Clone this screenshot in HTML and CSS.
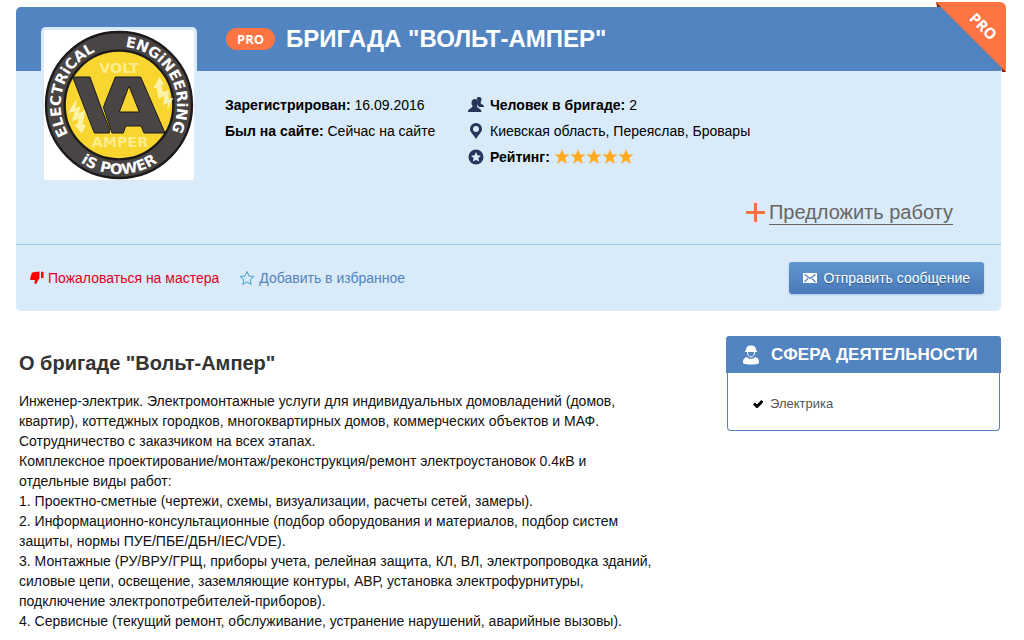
FILE: index.html
```html
<!DOCTYPE html>
<html lang="ru">
<head>
  <meta charset="UTF-8" />
  <meta name="viewport" content="width=device-width, initial-scale=1.0"/>
  <title>Бригада "Вольт-Ампер"</title>
  <link rel="stylesheet" href="styles.css">
</head>
<body>
  <section class="profile">
    <div class="ribbon">
      <svg viewBox="0 0 70 70">
        <path fill="#7a2a12" d="M0 0h5v5H1zM65 65h5v5h-4z"/>
        <path fill="#ff7443" d="M0 0H64a6 6 0 0 1 6 6V70z"/>
      </svg>
      <span>PRO</span>
    </div>

    <header class="profile-header">
      <span class="pro-badge">PRO</span>
      <h1>Бригада "Вольт-Ампер"</h1>
    </header>

    <div class="profile-body">
      <div class="avatar">
        <svg viewBox="0 0 450 450" role="img" aria-label="Volt Amper">
          <defs>
            <path id="ringTop" d="M225 400 A175 175 0 0 1 225 50 A175 175 0 0 1 225 400"/>
            <path id="ringBottom" d="M225 18 A207 207 0 0 0 225 432 A207 207 0 0 0 225 18"/>
          </defs>
          <circle cx="225" cy="225" r="219" fill="#4a4545" stroke="#1c1a1a" stroke-width="7"/>
          <circle cx="225" cy="225" r="163" fill="#f9d62f" stroke="#1c1a1a" stroke-width="7"/>
          <g class="logo-ring">
            <text><textPath href="#ringTop" startOffset="30%">ELECTRiCAL</textPath></text>
            <text><textPath href="#ringTop" startOffset="67%">ENGiNEERiNG</textPath></text>
            <text><textPath href="#ringBottom" startOffset="50%">iS POWER</textPath></text>
          </g>
          <g class="logo-name">
            <text x="225" y="129">VOLT</text>
            <text x="228" y="352">AMPER</text>
          </g>
          <g fill="#fdf3a8">
            <path d="M98 206 L72 250 L92 244 L84 274 L104 266 L100 284 H90 L114 310 L126 284 H116 L124 240 L104 250 L110 228 L94 236 Z"/>
            <path d="M346 142 L328 174 H338 L344 206 L360 198 L358 226 L372 218 L370 240 L388 204 L374 206 L374 180 L358 186 L352 166 L360 162 Z"/>
          </g>
          <g fill="#4a4545" stroke="#1c1a1a" stroke-width="3">
            <path d="M86 141 H138 L171 232 L196 296 V309 H151 Z"/>
            <path d="M226 141 H290 L363 309 H300 L291 288 H245 L238 309 H204 L178 232 L214 141 Z"/>
          </g>
          <path fill="#f9d62f" stroke="#1c1a1a" stroke-width="3" d="M255 168 L286 246 H226 Z"/>
        </svg>
      </div>

      <div class="facts">
        <p><b>Зарегистрирован:</b> 16.09.2016</p>
        <p><b>Был на сайте:</b> Сейчас на сайте</p>
      </div>

      <div class="facts facts-team">
        <p>
          <svg class="icon" viewBox="0 0 16 16"><path d="M11 0c2 0 2.500 1 2.500 2.500 0 1.500-.5 2-1 3 0 2 3.500 1.500 3.500 4.500h-5L9 7c1-1 .5-6-.5-6C9 .5 10 0 11 0z"/><path d="M7 2c2 0 3 1.500 3 3.500C10 7 9.500 8 9 9c0 2.500 4.500 2 4.500 6H0c0-4 4.500-3.500 4.500-6C4 8 3.500 7 3.500 5.500 3.500 3.500 5 2 7 2z"/></svg>
          <b>Человек в бригаде:</b> 2
        </p>
        <p>
          <svg class="icon" viewBox="0 0 16 16"><path fill-rule="evenodd" d="M8 0a6 6 0 0 1 6 6c0 3-3 5-6 10C5 11 2 9 2 6a6 6 0 0 1 6-6zm0 3a3 3 0 1 0 0 6 3 3 0 0 0 0-6z"/></svg>
          Киевская область, Переяслав, Бровары
        </p>
        <p>
          <svg class="icon" viewBox="0 0 16 16"><circle cx="8" cy="8" r="7.500"/><path class="icon-hole" d="M8 3l1.500 3.300 3.500.4-2.600 2.400.7 3.500L8 10.900l-3.100 1.700.7-3.500L3 6.700l3.500-.4z"/></svg>
          <b>Рейтинг:</b>
          <svg class="stars" viewBox="0 0 80 16" role="img" aria-label="5 из 5">
            <defs><path id="star" d="M8 0l2 5.500h5.500L11 9l2 6-5-3.500L3 15l2-6L.5 5.500H6z"/></defs>
            <use href="#star"/><use href="#star" x="16"/><use href="#star" x="32"/><use href="#star" x="48"/><use href="#star" x="64"/>
          </svg>
        </p>
      </div>
    </div>

    <div class="offer">
      <svg class="plus" viewBox="0 0 19 19"><path d="M8 0h3v8h8v3h-8v8H8v-8H0V8h8z"/></svg>
      <a href="#">Предложить работу</a>
    </div>

    <footer class="profile-footer">
      <a href="#" class="complain">
        <svg viewBox="0 0 14 14"><path d="M2 1.500L9.500.5V7L6 13C4 13 4.500 11 5 9H1C0 9 0 8 .5 6zM11 .5l2.500.5V7H11z"/></svg>
        Пожаловаться на мастера
      </a>
      <a href="#" class="favorite">
        <svg viewBox="0 0 16 16"><path d="M8 1.500l2 4.500 4.800.5-3.600 3.200 1 4.800L8 12l-4.200 2.500 1-4.800L1.200 6.500 6 6z"/></svg>
        Добавить в избранное
      </a>
      <button type="button" class="message">
        <svg viewBox="0 0 14 10"><path fill="#fff" d="M0 0h14v10H0z"/><path fill="none" stroke="#4f81bf" stroke-width="1.200" d="M1.500 1.500L7 5.500l5.500-4M1.500 9L5 5.500M12.500 9L9 5.500"/></svg>
        Отправить сообщение
      </button>
    </footer>
  </section>

  <div class="columns">
    <main>
      <h2>О бригаде "Вольт-Ампер"</h2>
      <p>Инженер-электрик. Электромонтажные услуги для индивидуальных домовладений (домов, квартир), коттеджных городков, многоквартирных домов, коммерческих объектов и МАФ.</p>
      <p>Сотрудничество с заказчиком на всех этапах.</p>
      <p>Комплексное проектирование/монтаж/реконструкция/ремонт электроустановок 0.4кВ и отдельные виды работ:</p>
      <p>1. Проектно-сметные (чертежи, схемы, визуализации, расчеты сетей, замеры).</p>
      <p>2. Информационно-консультационные (подбор оборудования и материалов, подбор систем защиты, нормы ПУЕ/ПБЕ/ДБН/IEC/VDE).</p>
      <p>3. Монтажные (РУ/ВРУ/ГРЩ, приборы учета, релейная защита, КЛ, ВЛ, электропроводка зданий, силовые цепи, освещение, заземляющие контуры, АВР, установка электрофурнитуры, подключение электропотребителей-приборов).</p>
      <p>4. Сервисные (текущий ремонт, обслуживание, устранение нарушений, аварийные вызовы).</p>
    </main>

    <aside class="activity">
      <h3>
        <svg viewBox="0 0 16 20"><path d="M3 5c0-3 2-4 3.500-4.500h3C11 1 13 2 13 5l1 1v1H2V6z"/><path fill="none" stroke="#fff" d="M4.500 7c0 3 1.500 5 3.500 5s3.500-2 3.500-5"/><path d="M0 18c0-4 1-5 4-6 2 2.500 6 2.500 8 0 3 1 4 2 4 6-1 2-15 2-16 0z"/></svg>
        Сфера деятельности
      </h3>
      <ul>
        <li>
          <svg viewBox="0 0 10 8"><path d="M1 3.500l3 3 5.500-5.500"/></svg>
          Электрика
        </li>
      </ul>
    </aside>
  </div>
</body>
</html>
```
FILE: styles.css
```css
* {
  margin: 0;
  padding: 0;
  box-sizing: border-box;
}

body {
  font-family: "Liberation Sans", Arial, sans-serif;
  font-size: 14px;
  line-height: 20px;
  color: #111;
  background-color: #fff;
  padding: 7px 23px 0 16px;
}

svg {
  flex-shrink: 0;
}

/* Profile card */
.profile {
  position: relative;
  background-color: #d9eaf8;
  border-radius: 5px;
}

.profile-header {
  display: flex;
  align-items: center;
  gap: 11px;
  height: 64px;
  padding-left: 210px;
  background-color: #5284c1;
  border-radius: 5px 0 0 0;
}

.profile-header h1 {
  font-size: 24px;
  line-height: 28px;
  color: #fff;
  text-transform: uppercase;
}

.pro-badge {
  padding: 0 11px;
  border-radius: 11px;
  background-color: #ff7443;
  color: #fff;
  font-family: "Open Sans", sans-serif;
  font-size: 13px;
  font-weight: bold;
  line-height: 22px;
}

/* Corner ribbon */
.ribbon {
  position: absolute;
  top: -5px;
  right: -5px;
  width: 70px;
  height: 70px;
}

.ribbon svg {
  display: block;
}

.ribbon span {
  position: absolute;
  top: 14px;
  right: 7px;
  color: #fff;
  font-family: "Open Sans", sans-serif;
  font-size: 15px;
  font-weight: bold;
  transform: rotate(45deg);
}

.profile-body {
  display: flex;
  height: 122px;
  padding-left: 25px;
}

.avatar {
  width: 156px;
  height: 156px;
  margin-top: -44px;
  border: 3px solid #d9eaf8;
  border-radius: 5px;
  background-color: #fff;
}

.avatar svg {
  display: block;
  width: 100%;
}

.logo-ring {
  fill: #fff;
  font-family: "DejaVu Sans", sans-serif;
  font-size: 44px;
  font-weight: bold;
  text-anchor: middle;
}

.logo-name {
  fill: #fdec8a;
  font-family: "DejaVu Sans", sans-serif;
  font-size: 43px;
  font-weight: bold;
  text-anchor: middle;
}

.facts {
  width: 243px;
  padding-top: 21px;
  margin-left: 28px;
  line-height: 26px;
  color: #000;
}

.facts-team {
  flex: 1;
  margin-left: 0;
}

.facts-team p {
  display: flex;
  align-items: center;
  gap: 4px;
}

.icon {
  width: 16px;
  height: 16px;
  margin-right: 2px;
  fill: #25365a;
}

.icon-hole {
  fill: #d9eaf8;
}

.stars {
  width: 80px;
  height: 16px;
  fill: #ffa81a;
}

.offer {
  display: flex;
  justify-content: flex-end;
  align-items: center;
  gap: 4px;
  height: 51px;
  padding: 0 48px 12px 0;
}

.offer a {
  color: #666;
  font-size: 20px;
  line-height: 23px;
  text-decoration: none;
  border-bottom: 1px solid #666;
}

.plus {
  width: 19px;
  height: 19px;
  fill: #f0743f;
}

.profile-footer {
  display: flex;
  align-items: center;
  gap: 20px;
  height: 67px;
  padding: 0 17px 0 14px;
  border-top: 1px solid #9cc8e8;
}

.profile-footer a {
  display: flex;
  align-items: center;
  gap: 4px;
  text-decoration: none;
}

.profile-footer .complain {
  color: #e2001a;
}

.complain svg {
  width: 14px;
  height: 14px;
  fill: #f00;
}

.profile-footer .favorite {
  color: #5284c1;
}

.favorite svg {
  width: 16px;
  height: 16px;
  fill: none;
  stroke: #45a0cc;
}

.message {
  display: flex;
  align-items: center;
  gap: 6px;
  height: 32px;
  margin-left: auto;
  padding: 0 14px;
  border: none;
  border-radius: 3px;
  background: linear-gradient(#5f97d0, #4a79b8);
  color: #fff;
  font-family: inherit;
  font-size: 14px;
  text-shadow: 0 1px 1px #2d5790;
  box-shadow: 0 1px 2px #a9c3e0;
  cursor: pointer;
}

.message svg {
  width: 14px;
  height: 10px;
}

/* Description and sidebar */
.columns {
  display: flex;
  align-items: flex-start;
  gap: 72px;
  padding: 25px 0 0 3px;
}

main {
  flex: 1;
}

main h2 {
  margin: 15px 0 16px;
  font-size: 20px;
  line-height: 24px;
  color: #333;
}

.activity {
  width: 275px;
}

.activity h3 {
  display: flex;
  align-items: center;
  gap: 12px;
  height: 37px;
  padding-left: 17px;
  border-radius: 3px 3px 0 0;
  background-color: #5284c1;
  color: #fff;
  font-size: 17px;
  text-transform: uppercase;
}

.activity h3 svg {
  width: 16px;
  height: 20px;
  fill: #fff;
}

.activity ul {
  margin: 0 1px;
  padding: 21px 25px 16px;
  border: 1px solid #5284c1;
  border-top: none;
  border-radius: 0 0 4px 4px;
  list-style: none;
}

.activity li {
  display: flex;
  align-items: center;
  gap: 7px;
  font-size: 13px;
  color: #555;
}

.activity li svg {
  width: 10px;
  height: 8px;
  fill: none;
  stroke: #000;
  stroke-width: 3;
}
```
